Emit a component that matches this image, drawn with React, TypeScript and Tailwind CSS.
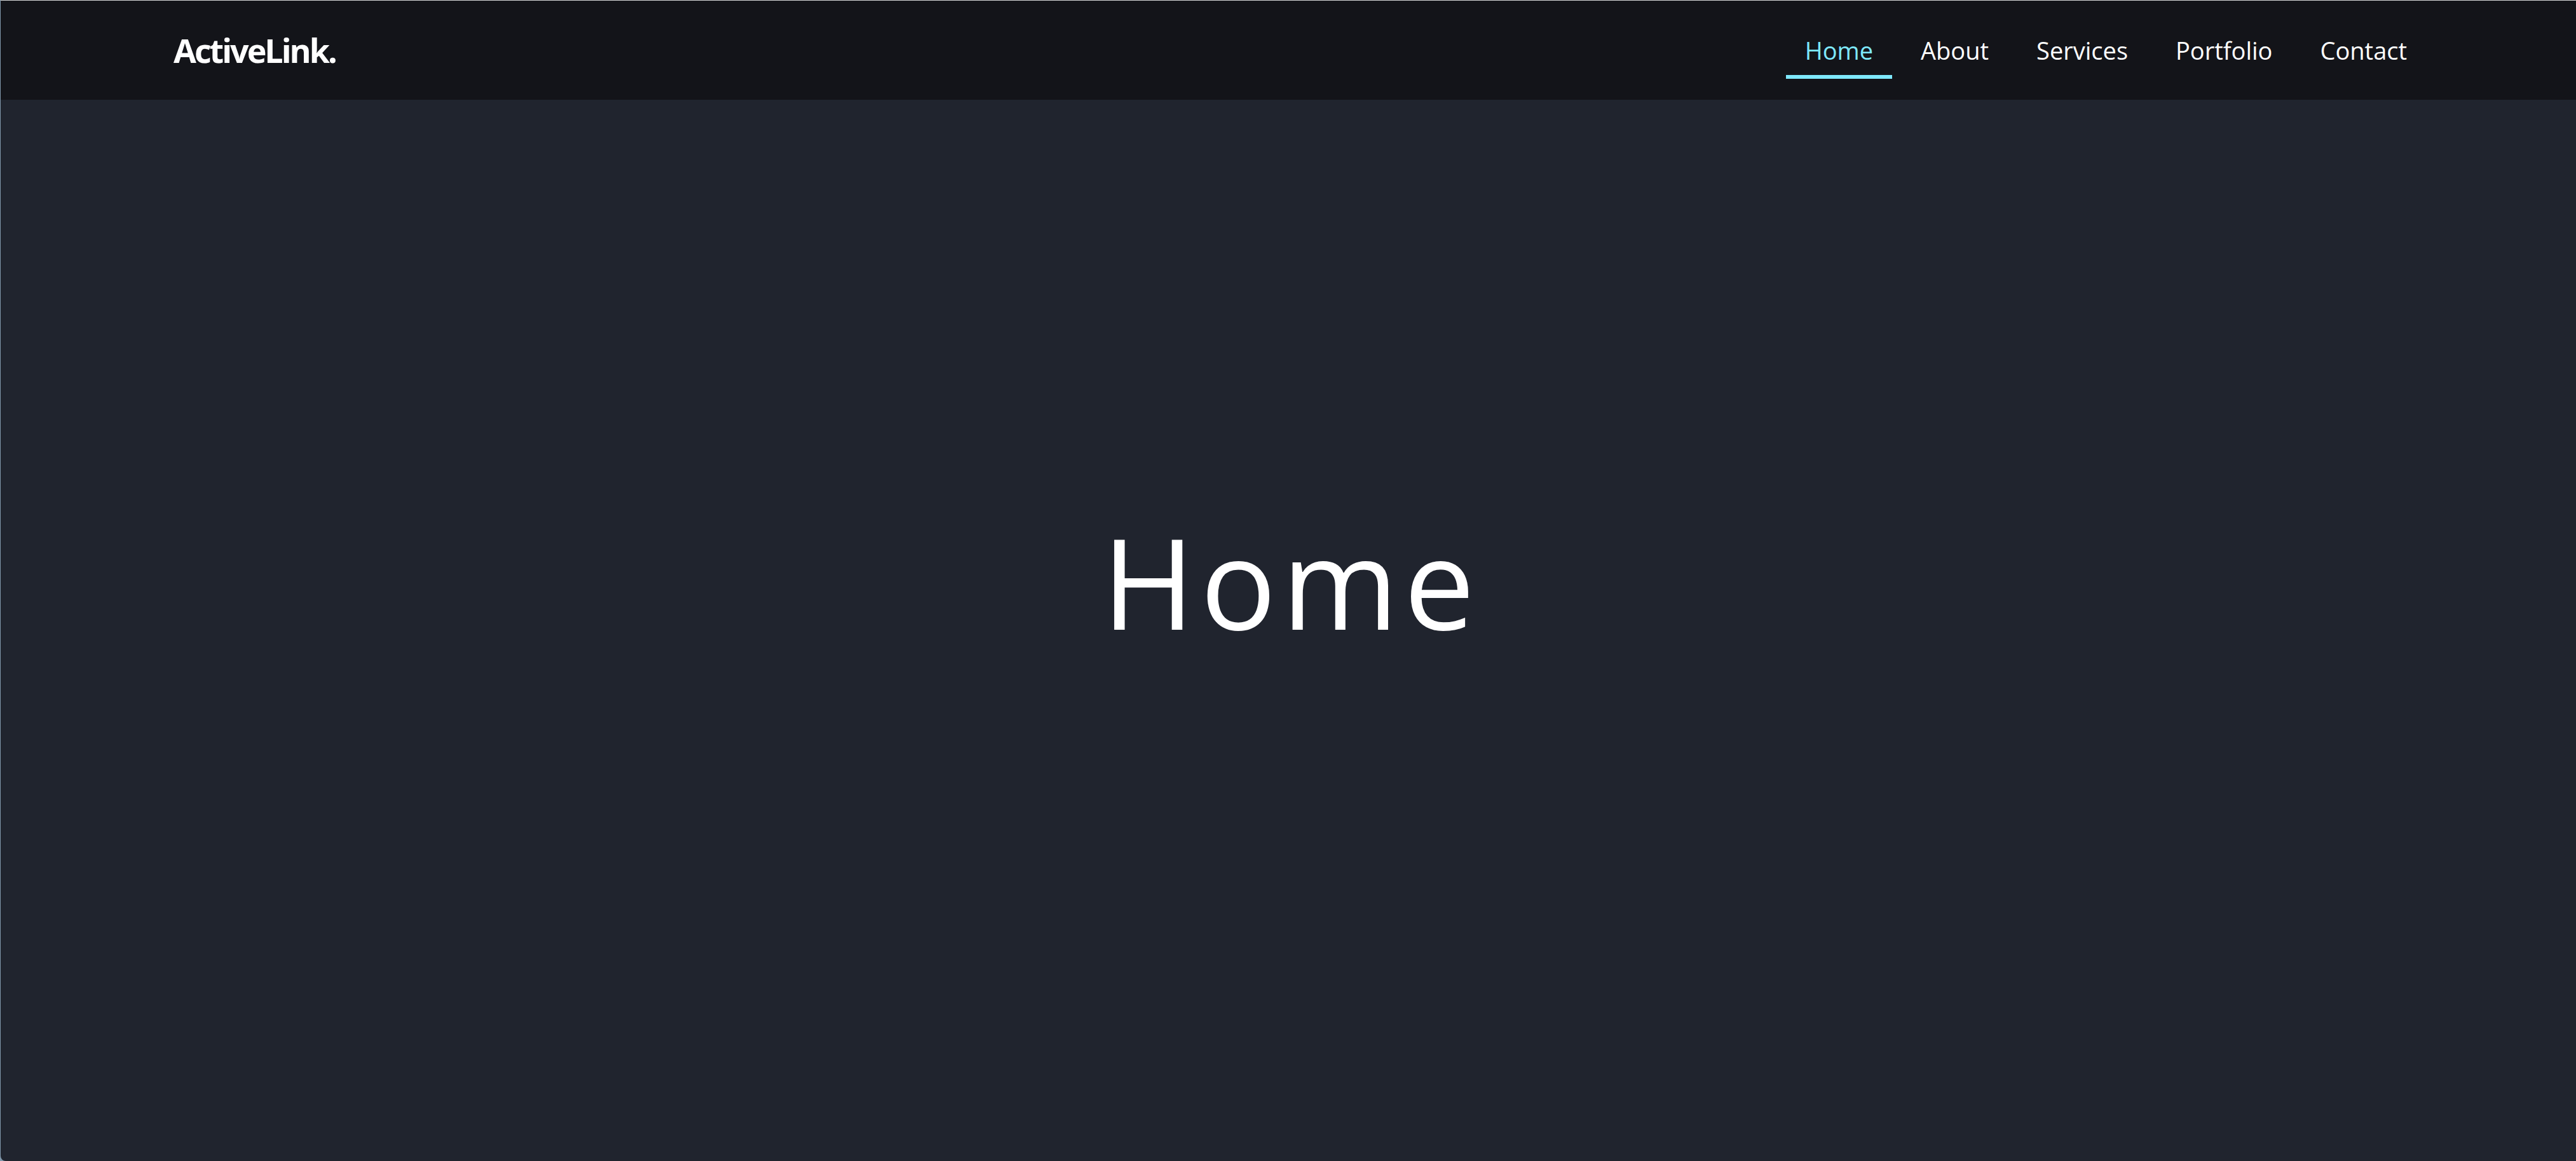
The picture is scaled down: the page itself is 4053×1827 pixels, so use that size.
import React from "react";

const links = ["Home", "About", "Services", "Portfolio", "Contact"];

export default function App() {
  return (
    <div className="h-screen w-full bg-[#8097ab] pl-px" style={{ fontFamily: '"Open Sans", "Liberation Sans", sans-serif' }}>
      <div className="relative h-full w-full overflow-hidden rounded-bl-[8px] border-t border-[#d6d6d6] bg-[#20242e]">
        <header className="absolute left-0 right-0 top-0 z-10 flex h-[156px] items-center justify-between bg-[#131419] pl-[272px] pr-[236px]">
          <a className="text-[52px] font-bold leading-none tracking-[-3px] text-white">ActiveLink.</a>
          <nav>
            <ul className="flex items-center gap-[15px]">
              {links.map((l, i) => (
                <li key={l} className="relative">
                  <a
                    className={
                      "block px-[30px] text-[38px] leading-none " +
                      (i === 0 ? "text-[#7ee8fc]" : "text-white")
                    }
                  >
                    {l}
                  </a>
                  {i === 0 && (
                    <span className="absolute bottom-[-26px] left-0 right-0 h-[6px] bg-[#7ee8fc]" />
                  )}
                </li>
              ))}
            </ul>
          </nav>
        </header>
        <main className="flex h-full items-center justify-center">
          <h1 className="pl-[9px] text-[198px] font-normal leading-none tracking-[9px] text-white">Home</h1>
        </main>
      </div>
    </div>
  );
}
